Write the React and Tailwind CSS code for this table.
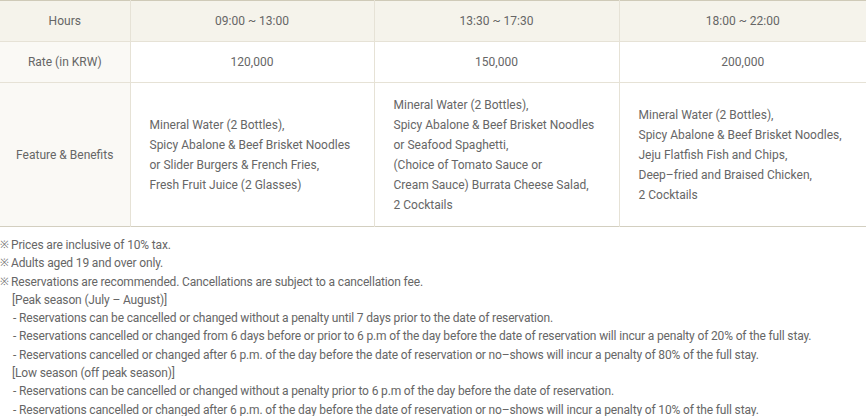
const font = { fontFamily: '"Roboto", "Liberation Sans", sans-serif' };

const columns = [
  {
    hours: "09:00 ~ 13:00",
    rate: "120,000",
    features: [
      "Mineral Water (2 Bottles),",
      "Spicy Abalone & Beef Brisket Noodles",
      "or Slider Burgers & French Fries,",
      "Fresh Fruit Juice (2 Glasses)",
    ],
  },
  {
    hours: "13:30 ~ 17:30",
    rate: "150,000",
    features: [
      "Mineral Water (2 Bottles),",
      "Spicy Abalone & Beef Brisket Noodles",
      "or Seafood Spaghetti,",
      "(Choice of Tomato Sauce or",
      "Cream Sauce) Burrata Cheese Salad,",
      "2 Cocktails",
    ],
  },
  {
    hours: "18:00 ~ 22:00",
    rate: "200,000",
    features: [
      "Mineral Water (2 Bottles),",
      "Spicy Abalone & Beef Brisket Noodles,",
      "Jeju Flatfish Fish and Chips,",
      "Deep\u2013fried and Braised Chicken,",
      "2 Cocktails",
    ],
  },
];

const peak = [
  "Reservations can be cancelled or changed without a penalty until 7 days prior to the date of reservation.",
  "Reservations cancelled or changed from 6 days before or prior to 6 p.m of the day before the date of reservation will incur a penalty of 20% of the full stay.",
  "Reservations cancelled or changed after 6 p.m. of the day before the date of reservation or no\u2013shows will incur a penalty of 80% of the full stay.",
];

const low = [
  "Reservations can be cancelled or changed without a penalty prior to 6 p.m of the day before the date of reservation.",
  "Reservations cancelled or changed after 6 p.m. of the day before the date of reservation or no\u2013shows will incur a penalty of 10% of the full stay.",
];

function Note({ children }) {
  return (
    <p className="flex">
      <span className="w-[11px] shrink-0 text-[10.5px] text-[#777]">※</span>
      <span>{children}</span>
    </p>
  );
}

function Dash({ text }) {
  return (
    <p className="flex pl-[13px]">
      <span className="w-[6px] shrink-0">-</span>
      <span>{text}</span>
    </p>
  );
}

export default function App() {
  return (
    <div className="w-[866px] bg-white text-[12px] text-[#666]" style={font}>
      <table className="w-full table-fixed border-collapse border-t border-b border-t-[#cfcab8] border-b-[#d3cfc0]">
        <colgroup>
          <col className="w-[130px]" />
          <col className="w-[244px]" />
          <col className="w-[245px]" />
          <col />
        </colgroup>
        <tbody>
          <tr className="h-[41px] bg-[#f5f3eb]">
            <th className="border-r border-[#e6e2d6] font-normal">Hours</th>
            {columns.map((c, i) => (
              <td
                key={c.hours}
                className={`text-center ${i < 2 ? "border-r border-[#e6e2d6]" : ""}`}
              >
                {c.hours}
              </td>
            ))}
          </tr>
          <tr className="h-[41px] border-t border-[#e6e2d6]">
            <th className="border-r border-[#e6e2d6] bg-[#faf9f5] font-normal">Rate (in KRW)</th>
            {columns.map((c, i) => (
              <td
                key={c.rate}
                className={`text-center ${i < 2 ? "border-r border-[#e6e2d6]" : ""}`}
              >
                {c.rate}
              </td>
            ))}
          </tr>
          <tr className="h-[144px] border-t border-[#e6e2d6]">
            <th className="border-r border-[#e6e2d6] bg-[#faf9f5] font-normal">Feature &amp; Benefits</th>
            {columns.map((c, i) => (
              <td
                key={i}
                className={`pl-[19px] leading-[20px] ${i < 2 ? "border-r border-[#e6e2d6]" : ""}`}
              >
                {c.features.map((f) => (
                  <div key={f}>{f}</div>
                ))}
              </td>
            ))}
          </tr>
        </tbody>
      </table>

      <div className="pt-[9px] leading-[18.3px] tracking-[-0.15px]">
        <Note>Prices are inclusive of 10% tax.</Note>
        <Note>Adults aged 19 and over only.</Note>
        <Note>Reservations are recommended. Cancellations are subject to a cancellation fee.</Note>
        <p className="pl-[12px]">[Peak season (July – August)]</p>
        {peak.map((t) => (
          <Dash key={t} text={t} />
        ))}
        <p className="pl-[12px]">[Low season (off peak season)]</p>
        {low.map((t) => (
          <Dash key={t} text={t} />
        ))}
      </div>
    </div>
  );
}
